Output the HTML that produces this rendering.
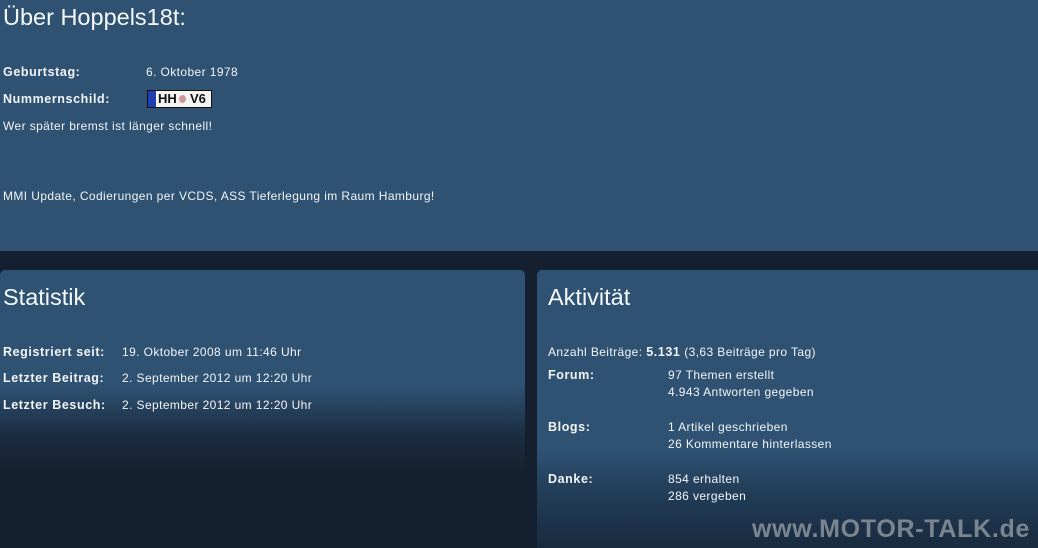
<!DOCTYPE html>
<html><head><meta charset="utf-8"><style>
html,body{margin:0;width:1038px;height:548px;overflow:hidden}
body{background:#142030;font-family:"Liberation Sans",sans-serif;color:#fff;position:relative}
.top{position:absolute;left:0;top:0;width:1038px;height:251px;background:#2f5272}
.p{position:absolute;border-radius:5px}
.l{left:0;top:270px;width:525px;height:201px;background:linear-gradient(#2f5272 0,#2f5272 115px,#1b2d42 165px,#15212f 201px)}
.r{left:537px;top:270px;width:501px;height:278px;border-radius:5px 0 0 0;background:linear-gradient(#2f5272 0,#2f5272 180px,#24405c 215px,#182a3e 278px)}
.t{position:absolute;font-size:23.5px;color:#f4f8fc}
.s{position:absolute;font-size:12px;letter-spacing:0.4px;white-space:nowrap;color:#f0f4f8;line-height:17px}
b{font-weight:bold;font-size:12.5px;letter-spacing:0.6px}
.plate{position:absolute;left:147px;top:90px;width:63px;height:16px;background:#f4f4f4;border:1px solid #111;font:bold 13px "Liberation Sans",sans-serif;color:#111;line-height:16px}
.plate i{position:absolute;left:0;top:0;width:8px;height:16px;background:#1f3fb0}
.wm{position:absolute;left:752px;top:515px;font:bold 25px "Liberation Sans",sans-serif;color:#7b8590;letter-spacing:0.7px;white-space:nowrap}
</style></head><body>
<div class="top"></div>
<div class="p l"></div>
<div class="p r"></div>
<div class="t" style="left:3px;top:4px">Über Hoppels18t:</div>
<div class="s" style="left:3px;top:64px"><b>Geburtstag:</b></div>
<div class="s" style="left:146px;top:64px">6. Oktober 1978</div>
<div class="s" style="left:3px;top:91px"><b>Nummernschild:</b></div>
<div class="plate"><i></i><span style="position:absolute;left:10px">HH</span><span style="position:absolute;left:31px;top:4px;width:7px;height:8px;background:#c99;border-radius:50%"></span><span style="position:absolute;left:42px">V6</span></div>
<div class="s" style="left:3px;top:118px">Wer später bremst ist länger schnell!</div>
<div class="s" style="left:3px;top:188px">MMI Update, Codierungen per VCDS, ASS Tieferlegung im Raum Hamburg!</div>
<div class="t" style="left:3px;top:284px">Statistik</div>
<div class="s" style="left:3px;top:344px"><b>Registriert seit:</b></div>
<div class="s" style="left:122px;top:344px">19. Oktober 2008 um 11:46 Uhr</div>
<div class="s" style="left:3px;top:370px"><b>Letzter Beitrag:</b></div>
<div class="s" style="left:122px;top:370px">2. September 2012 um 12:20 Uhr</div>
<div class="s" style="left:3px;top:397px"><b>Letzter Besuch:</b></div>
<div class="s" style="left:122px;top:397px">2. September 2012 um 12:20 Uhr</div>
<div class="t" style="left:548px;top:284px">Aktivität</div>
<div class="s" style="left:548px;top:344px">Anzahl Beiträge: <b>5.131</b> (3,63 Beiträge pro Tag)</div>
<div class="s" style="left:548px;top:367px"><b>Forum:</b></div>
<div class="s" style="left:668px;top:367px">97 Themen erstellt<br>4.943 Antworten gegeben</div>
<div class="s" style="left:548px;top:419px"><b>Blogs:</b></div>
<div class="s" style="left:668px;top:419px">1 Artikel geschrieben<br>26 Kommentare hinterlassen</div>
<div class="s" style="left:548px;top:471px"><b>Danke:</b></div>
<div class="s" style="left:668px;top:471px">854 erhalten<br>286 vergeben</div>
<div class="wm">www.MOTOR-TALK.de</div>
</body></html>
